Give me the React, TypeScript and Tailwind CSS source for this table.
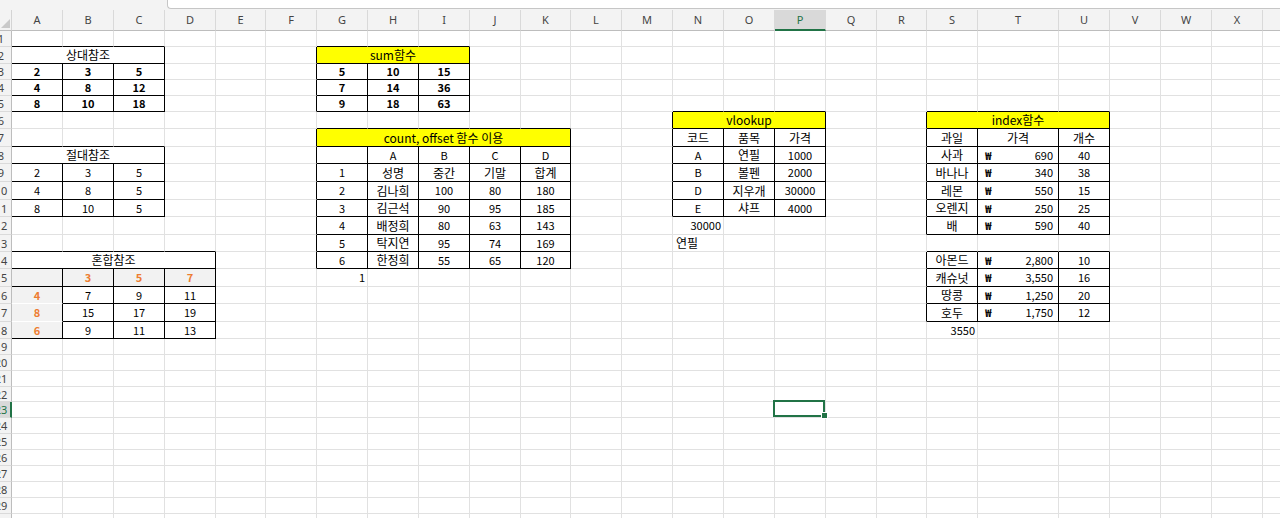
import React from 'react';

const COLS = ['A','B','C','D','E','F','G','H','I','J','K','L','M','N','O','P','Q','R','S','T','U','V','W','X','Y'];
const NROWS = 30;

type Align = 'c' | 'l' | 'r' | 'a';
type Cell = { t: string; span?: number; cls?: string; al?: Align };

const BOLD = 'text-[11px] font-bold text-black';
const NUM = 'text-[11px] text-black';
const KOR = 'text-[12px] text-black';
const YEL = 'text-[12px] text-black bg-[#ffff00]';
const ORG = 'text-[11px] font-bold text-[#ed7d31] bg-[#f2f2f2]';

const cells: Record<string, Cell> = {};
function put(col: string, row: number, vals: string[], cls: string, al: Align = 'c') {
  const s = COLS.indexOf(col);
  vals.forEach((v, i) => {
    cells[COLS[s + i] + row] = { t: v, cls, al };
  });
}
function merge(col: string, row: number, t: string, span: number, cls: string) {
  cells[col + row] = { t, span, cls, al: 'c' };
}

// 상대참조
merge('A', 2, '상대참조', 3, KOR);
put('A', 3, ['2', '3', '5'], BOLD);
put('A', 4, ['4', '8', '12'], BOLD);
put('A', 5, ['8', '10', '18'], BOLD);
// sum함수
merge('G', 2, 'sum함수', 3, YEL);
put('G', 3, ['5', '10', '15'], BOLD);
put('G', 4, ['7', '14', '36'], BOLD);
put('G', 5, ['9', '18', '63'], BOLD);
// 절대참조
merge('A', 8, '절대참조', 3, KOR);
put('A', 9, ['2', '3', '5'], NUM);
put('A', 10, ['4', '8', '5'], NUM);
put('A', 11, ['8', '10', '5'], NUM);
// 혼합참조
merge('A', 14, '혼합참조', 4, KOR);
put('A', 15, ['', '3', '5', '7'], ORG);
put('A', 16, ['4'], ORG);
put('A', 17, ['8'], ORG);
put('A', 18, ['6'], ORG);
put('B', 16, ['7', '9', '11'], NUM);
put('B', 17, ['15', '17', '19'], NUM);
put('B', 18, ['9', '11', '13'], NUM);
// count, offset
merge('G', 7, 'count, offset 함수 이용', 5, YEL);
put('G', 8, ['', 'A', 'B', 'C', 'D'], NUM);
put('G', 9, ['1'], NUM);
put('H', 9, ['성명', '중간', '기말', '합계'], KOR);
const people: [string, string, string, string, string][] = [
  ['2', '김나희', '100', '80', '180'],
  ['3', '김근석', '90', '95', '185'],
  ['4', '배정희', '80', '63', '143'],
  ['5', '탁지연', '95', '74', '169'],
  ['6', '한정희', '55', '65', '120'],
];
people.forEach((p, i) => {
  put('G', 10 + i, [p[0]], NUM);
  put('H', 10 + i, [p[1]], KOR);
  put('I', 10 + i, [p[2], p[3], p[4]], NUM);
});
put('G', 15, ['1'], NUM, 'r');
// vlookup
merge('N', 6, 'vlookup', 3, YEL);
put('N', 7, ['코드', '품목', '가격'], KOR);
const vl: [string, string, string][] = [
  ['A', '연필', '1000'],
  ['B', '볼펜', '2000'],
  ['D', '지우개', '30000'],
  ['E', '샤프', '4000'],
];
vl.forEach((v, i) => {
  put('N', 8 + i, [v[0]], NUM);
  put('O', 8 + i, [v[1]], KOR);
  put('P', 8 + i, [v[2]], NUM);
});
put('N', 12, ['30000'], NUM, 'r');
put('N', 13, ['연필'], KOR, 'l');
// index
merge('S', 6, 'index함수', 3, YEL);
put('S', 7, ['과일', '가격', '개수'], KOR);
const fruits: [string, string, string][] = [
  ['사과', '690', '40'],
  ['바나나', '340', '38'],
  ['레몬', '550', '15'],
  ['오렌지', '250', '25'],
  ['배', '590', '40'],
];
fruits.forEach((f, i) => {
  put('S', 8 + i, [f[0]], KOR);
  put('T', 8 + i, [f[1]], NUM, 'a');
  put('U', 8 + i, [f[2]], NUM);
});
const nuts: [string, string, string][] = [
  ['아몬드', '2,800', '10'],
  ['캐슈넛', '3,550', '16'],
  ['땅콩', '1,250', '20'],
  ['호두', '1,750', '12'],
];
nuts.forEach((f, i) => {
  put('S', 14 + i, [f[0]], KOR);
  put('T', 14 + i, [f[1]], NUM, 'a');
  put('U', 14 + i, [f[2]], NUM);
});
put('S', 18, ['3550'], NUM, 'r');

const tables: [number, number, number, number][] = [
  [0, 2, 2, 5],
  [6, 2, 8, 5],
  [0, 8, 2, 11],
  [0, 14, 3, 18],
  [6, 7, 10, 14],
  [13, 6, 15, 11],
  [18, 6, 20, 12],
  [18, 14, 20, 17],
];
const inT = (c: number, r: number) =>
  tables.some(([c1, r1, c2, r2]) => c >= c1 && c <= c2 && r >= r1 && r <= r2);

const covered = new Set<string>();
Object.entries(cells).forEach(([k, v]) => {
  if (v.span && v.span > 1) {
    const col = k.replace(/[0-9]/g, '');
    const row = k.replace(/[A-Z]/g, '');
    const s = COLS.indexOf(col);
    for (let i = 1; i < v.span; i++) covered.add(COLS[s + i] + row);
  }
});

const SPAN: Record<number, string> = { 1: '', 3: 'col-span-3', 4: 'col-span-4', 5: 'col-span-5' };
const WHITE_BOTTOM = new Set(['A16', 'A17']);

const SEL_COL = 'P';
const SEL_ROW = 23;

function SheetCell({ c, r }: { c: number; r: number }) {
  const key = COLS[c] + r;
  const cell = cells[key];
  const span = cell?.span ?? 1;
  const last = c + span - 1;
  const rightBlack = inT(last, r) || inT(last + 1, r);
  let bottomBlack = false;
  for (let i = c; i <= last; i++) if (inT(i, r) || inT(i, r + 1)) bottomBlack = true;
  const rb = rightBlack ? 'border-r-black' : 'border-r-[#e1e1e1]';
  const bb = WHITE_BOTTOM.has(key) ? 'border-b-white' : bottomBlack ? 'border-b-black' : 'border-b-[#e1e1e1]';
  const al = cell?.al ?? 'c';
  const alCls =
    al === 'c' ? 'justify-center' : al === 'r' ? 'justify-end pr-[2px]' : al === 'l' ? 'justify-start pl-[3px]' : 'justify-between pl-[7px] pr-[5px]';
  const selected = COLS[c] === SEL_COL && r === SEL_ROW;
  return (
    <div
      className={`${SPAN[span]} flex items-center whitespace-nowrap leading-none border-r border-b ${rb} ${bb} ${alCls} ${cell?.cls ?? ''} ${selected ? 'relative' : ''}`}
    >
      {cell && al === 'a' ? (
        <>
          <span className="font-bold">₩</span>
          <span>{cell.t}</span>
        </>
      ) : (
        cell?.t ?? ''
      )}
      {selected && (
        <>
          <div className="absolute -left-[2px] -top-[2px] right-0 bottom-0 border-2 border-[#217346]" />
          <div className="absolute -right-[3px] -bottom-[2px] w-[7px] h-[7px] bg-[#217346] border border-white" />
        </>
      )}
    </div>
  );
}

export default function App() {
  const rows: React.ReactNode[] = [];
  rows.push(
    <div key="corner" className="relative bg-[#f3f3f3] border-r border-b border-r-[#d4d4d4] border-b-[#bdbdbd]">
      <svg className="absolute right-[1px] bottom-[2px]" width="9" height="9" viewBox="0 0 9 9">
        <polygon points="9,0 9,9 0,9" fill="#c9c9c9" />
      </svg>
    </div>
  );
  COLS.forEach((col) => {
    const sel = col === SEL_COL;
    rows.push(
      <div
        key={'h' + col}
        className={`flex items-center justify-center text-[11px] font-['Noto_Sans',sans-serif] border-r border-r-[#d9d9d9] ${
          sel ? 'bg-[#d9d9d9] text-[#217346] border-b-2 border-b-[#217346] pt-[1px]' : 'bg-[#f3f3f3] text-[#444] border-b border-b-[#bdbdbd]'
        }`}
      >
        {col}
      </div>
    );
  });
  for (let r = 1; r <= NROWS; r++) {
    const sel = r === SEL_ROW;
    rows.push(
      <div
        key={'rh' + r}
        className={`overflow-hidden flex items-center text-[11px] font-['Noto_Sans',sans-serif] border-b border-b-[#dadada] ${
          sel ? 'bg-[#d9d9d9] text-[#217346] border-r-2 border-r-[#217346]' : 'bg-[#f3f3f3] text-[#444] border-r border-r-[#bdbdbd]'
        }`}
      >
        <span className="-ml-[9px] w-[20px] shrink-0 text-center leading-none">{r}</span>
      </div>
    );
    for (let c = 0; c < COLS.length; c++) {
      const key = COLS[c] + r;
      if (covered.has(key)) continue;
      rows.push(<SheetCell key={key} c={c} r={r} />);
    }
  }

  return (
    <div className="w-[1280px] h-[518px] overflow-hidden bg-white font-['Noto_Sans_CJK_KR',sans-serif]">
      <div className="h-[10px] bg-[#f3f3f3] flex pl-[167px]">
        <div className="flex-1 h-[9px] bg-white border-l border-b border-[#c6c6c6] rounded-bl-[4px]" />
      </div>
      <div className="grid w-[1314px] grid-cols-[12px_51px_51px_51px_51px_50px_51px_51px_51px_51px_51px_50px_51px_51px_51px_51px_51px_51px_50px_51px_81px_51px_51px_51px_51px_51px] grid-rows-[21px_16px_17px_16px_16px_16px_17px_18px_17px_18px_18px_17px_18px_17px_17px_18px_17px_18px_17px_16px_16px_16px_15px_16px_16px_16px_16px_16px_16px_16px_16px]">
        {rows}
      </div>
    </div>
  );
}
